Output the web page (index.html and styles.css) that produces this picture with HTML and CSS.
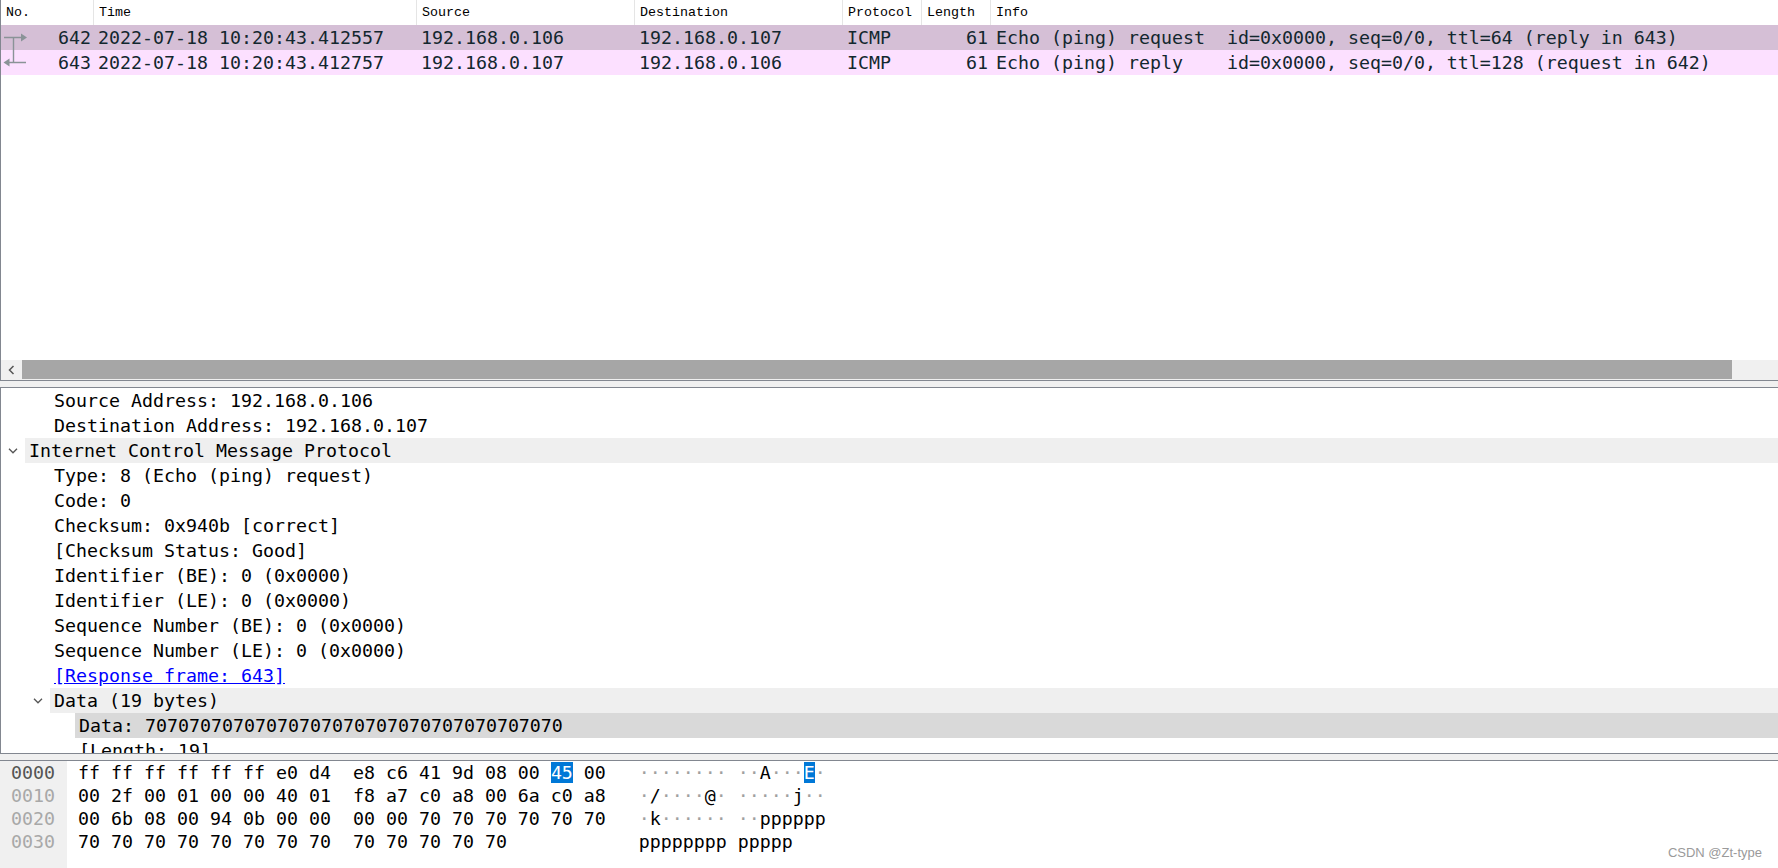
FILE: index.html
```html
<!DOCTYPE html>
<html>
<head>
<meta charset="utf-8">
<link rel="stylesheet" href="styles.css">
</head>
<body>
<div class="app">
  <section class="list">
    <div class="cols list-head">
      <div class="hcell">No.</div>
      <div class="hcell">Time</div>
      <div class="hcell">Source</div>
      <div class="hcell">Destination</div>
      <div class="hcell">Protocol</div>
      <div class="hcell">Length</div>
      <div class="hcell">Info</div>
    </div>
    <div class="cols prow req">
      <div class="cell num">
        <svg class="rel" width="28" height="25" viewBox="0 0 28 25"><path d="M3 12.5H21M12.5 12.5V25" stroke="#8a9397" stroke-width="1.4" fill="none"/><path d="M20 8.5L26 12.5L20 16.5Z" fill="#8a9397"/></svg>
        <span>642</span>
      </div>
      <div class="cell">2022-07-18 10:20:43.412557</div>
      <div class="cell">192.168.0.106</div>
      <div class="cell">192.168.0.107</div>
      <div class="cell">ICMP</div>
      <div class="cell len">61</div>
      <div class="cell info">Echo (ping) request  id=0x0000, seq=0/0, ttl=64 (reply in 643)</div>
    </div>
    <div class="cols prow rep">
      <div class="cell num">
        <svg class="rel" width="28" height="25" viewBox="0 0 28 25"><path d="M12.5 0V12.5M8 12.5H25" stroke="#8a9397" stroke-width="1.4" fill="none"/><path d="M8.5 8.5L2.5 12.5L8.5 16.5Z" fill="#8a9397"/></svg>
        <span>643</span>
      </div>
      <div class="cell">2022-07-18 10:20:43.412757</div>
      <div class="cell">192.168.0.107</div>
      <div class="cell">192.168.0.106</div>
      <div class="cell">ICMP</div>
      <div class="cell len">61</div>
      <div class="cell info">Echo (ping) reply    id=0x0000, seq=0/0, ttl=128 (request in 642)</div>
    </div>
    <div class="list-fill"></div>
    <div class="hscroll">
      <div class="sb-btn"><svg width="7" height="10" viewBox="0 0 7 10"><path d="M5.5 1L1.5 5L5.5 9" stroke="#555" stroke-width="1.5" fill="none"/></svg></div>
      <div class="sb-thumb"></div>
      <div class="sb-track"></div>
    </div>
  </section>

  <div class="splitter"></div>

  <section class="tree">
    <div class="trow"><span class="ind l1"></span><span class="tog"></span><span class="lbl">Source Address: 192.168.0.106</span></div>
    <div class="trow"><span class="ind l1"></span><span class="tog"></span><span class="lbl">Destination Address: 192.168.0.107</span></div>
    <div class="trow open"><span class="tog"><svg width="10" height="6" viewBox="0 0 10 6"><path d="M1 0.8L5 4.8L9 0.8" stroke="#555" stroke-width="1.3" fill="none"/></svg></span><span class="lbl">Internet Control Message Protocol</span></div>
    <div class="trow"><span class="ind l1"></span><span class="tog"></span><span class="lbl">Type: 8 (Echo (ping) request)</span></div>
    <div class="trow"><span class="ind l1"></span><span class="tog"></span><span class="lbl">Code: 0</span></div>
    <div class="trow"><span class="ind l1"></span><span class="tog"></span><span class="lbl">Checksum: 0x940b [correct]</span></div>
    <div class="trow"><span class="ind l1"></span><span class="tog"></span><span class="lbl">[Checksum Status: Good]</span></div>
    <div class="trow"><span class="ind l1"></span><span class="tog"></span><span class="lbl">Identifier (BE): 0 (0x0000)</span></div>
    <div class="trow"><span class="ind l1"></span><span class="tog"></span><span class="lbl">Identifier (LE): 0 (0x0000)</span></div>
    <div class="trow"><span class="ind l1"></span><span class="tog"></span><span class="lbl">Sequence Number (BE): 0 (0x0000)</span></div>
    <div class="trow"><span class="ind l1"></span><span class="tog"></span><span class="lbl">Sequence Number (LE): 0 (0x0000)</span></div>
    <div class="trow"><span class="ind l1"></span><span class="tog"></span><span class="lbl"><span class="link">[Response frame: 643]</span></span></div>
    <div class="trow open"><span class="ind l1"></span><span class="tog"><svg width="10" height="6" viewBox="0 0 10 6"><path d="M1 0.8L5 4.8L9 0.8" stroke="#555" stroke-width="1.3" fill="none"/></svg></span><span class="lbl">Data (19 bytes)</span></div>
    <div class="trow sel"><span class="ind l2"></span><span class="tog"></span><span class="lbl">Data: 70707070707070707070707070707070707070</span></div>
    <div class="trow"><span class="ind l2"></span><span class="tog"></span><span class="lbl">[Length: 19]</span></div>
  </section>

  <div class="splitter"></div>

  <section class="bytes">
    <div class="offsets">
      <div class="bline cur">0000</div>
      <div class="bline">0010</div>
      <div class="bline">0020</div>
      <div class="bline">0030</div>
    </div>
    <div class="dump">
      <div class="bline">ff ff ff ff ff ff e0 d4  e8 c6 41 9d 08 00 <span class="hit">45</span> 00   <span class="d">········ ··</span>A<span class="d">···</span><span class="hit">E</span><span class="d">·</span></div>
      <div class="bline">00 2f 00 01 00 00 40 01  f8 a7 c0 a8 00 6a c0 a8   <span class="d">·</span>/<span class="d">····</span>@<span class="d">· ·····</span>j<span class="d">··</span></div>
      <div class="bline">00 6b 08 00 94 0b 00 00  00 00 70 70 70 70 70 70   <span class="d">·</span>k<span class="d">······ ··</span>pppppp</div>
      <div class="bline">70 70 70 70 70 70 70 70  70 70 70 70 70            pppppppp ppppp</div>
    </div>
  </section>

  <div class="watermark">CSDN @Zt-type</div>
</div>
</body>
</html>
```

FILE: styles.css
```css
* { box-sizing: border-box; }

html, body {
  margin: 0;
  padding: 0;
}

body {
  width: 1778px;
  height: 868px;
  overflow: hidden;
  background: #ffffff;
  font-family: "DejaVu Sans Mono", monospace;
  color: #000;
}

.app {
  position: relative;
  display: flex;
  flex-direction: column;
  height: 868px;
}

/* ---------- packet list ---------- */
.list {
  height: 380px;
  flex: none;
  display: flex;
  flex-direction: column;
  border-left: 1px solid #828790;
}

.cols {
  display: grid;
  grid-template-columns: 93px 323px 218px 208px 79px 69px 1fr;
}

.list-head {
  height: 25px;
  flex: none;
  font-family: "Liberation Mono", monospace;
  font-size: 13.33px;
  color: #000;
}

.hcell {
  display: flex;
  align-items: center;
  padding-left: 5px;
  border-right: 1px solid #e5e5e5;
  white-space: nowrap;
}

.hcell:last-child { border-right: 0; }

.prow {
  height: 25px;
  flex: none;
  font-size: 18.27px;
  color: #12272e;
}

.prow .cell {
  display: flex;
  align-items: center;
  padding-left: 4px;
  white-space: pre;
  overflow: hidden;
}

.prow .num {
  justify-content: space-between;
  padding-left: 0;
  padding-right: 3px;
}

.rel { flex: none; display: block; }

.prow .len {
  justify-content: flex-end;
  padding-right: 3px;
}

.prow .info { padding-left: 5px; }

.req { background: #d5bfd6; }
.rep { background: #fce0ff; }

.list-fill { flex: 1; }

.hscroll {
  height: 20px;
  flex: none;
  display: flex;
  background: #f0f0f0;
}

.sb-btn {
  width: 21px;
  flex: none;
  display: flex;
  align-items: center;
  justify-content: center;
}

.sb-thumb {
  width: 1710px;
  flex: none;
  height: 19px;
  background: #a6a6a6;
}

.sb-track { flex: 1; }

/* ---------- splitters ---------- */
.splitter {
  height: 8px;
  flex: none;
  background: #f0f0f0;
  border-top: 1px solid #828790;
  border-bottom: 1px solid #828790;
}

/* ---------- detail tree ---------- */
.tree {
  height: 365px;
  flex: none;
  overflow: hidden;
  border-left: 1px solid #828790;
  font-size: 18.27px;
}

.trow {
  height: 25px;
  display: flex;
  align-items: stretch;
}

.ind { flex: none; }
.l1 { width: 25px; }
.l2 { width: 50px; }

.tog {
  width: 24px;
  flex: none;
  display: flex;
  align-items: center;
  justify-content: center;
}

.tog svg { display: block; }

.lbl {
  flex: 1;
  display: flex;
  align-items: center;
  padding-left: 4px;
  white-space: pre;
}

.open .lbl { background: #efefef; }
.sel .lbl { background: #d9d9d9; }

.link {
  color: #0000ff;
  text-decoration: underline;
}

/* ---------- bytes ---------- */
.bytes {
  height: 107px;
  flex: none;
  display: flex;
  font-size: 18.27px;
}

.offsets {
  width: 67px;
  flex: none;
  background: #f0f0f0;
  padding-left: 11px;
  color: #a8a8a8;
}

.offsets .cur { color: #555555; }

.bline {
  height: 23px;
  line-height: 23px;
  white-space: pre;
}

.dump {
  padding-left: 11px;
  color: #000;
}

.d { color: #a0a0a0; }

.hit {
  background: #0078d7;
  color: #ffffff;
}

/* ---------- watermark ---------- */
.watermark {
  position: absolute;
  right: 16px;
  bottom: 8px;
  font-family: "Liberation Sans", Arial, sans-serif;
  font-size: 13px;
  color: #9a9a9a;
}
```
